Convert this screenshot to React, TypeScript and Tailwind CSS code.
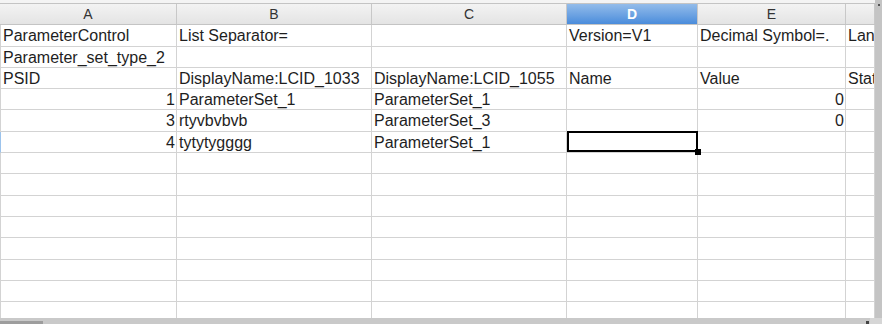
import React from "react";

type Cell = { t: string; r?: boolean };

const colW = ["w-[177px] border-l", "w-[195px]", "w-[195px]", "w-[131px]", "w-[148px]", "w-[29px]"];
const headW = ["w-[177px]", "w-[195px]", "w-[195px]", "w-[131px]", "w-[148px]", "w-[29px]"];
const heads = ["A", "B", "C", "D", "E", ""];
const rowH = [
  "h-[22px]", "h-[21px]", "h-[21px]", "h-[21px]", "h-[22px]", "h-[21px]", "h-[21px]",
  "h-[22px]", "h-[21px]", "h-[21px]", "h-[22px]", "h-[21px]", "h-[21px]", "h-[22px]",
];

const data: Cell[][] = [
  [{ t: "ParameterControl" }, { t: "List Separator=" }, { t: "" }, { t: "Version=V1" }, { t: "Decimal Symbol=." }, { t: "Language=" }],
  [{ t: "Parameter_set_type_2" }, { t: "" }, { t: "" }, { t: "" }, { t: "" }, { t: "" }],
  [{ t: "PSID" }, { t: "DisplayName:LCID_1033" }, { t: "DisplayName:LCID_1055" }, { t: "Name" }, { t: "Value" }, { t: "Status" }],
  [{ t: "1", r: true }, { t: "ParameterSet_1" }, { t: "ParameterSet_1" }, { t: "" }, { t: "0", r: true }, { t: "" }],
  [{ t: "3", r: true }, { t: "rtyvbvbvb" }, { t: "ParameterSet_3" }, { t: "" }, { t: "0", r: true }, { t: "" }],
  [{ t: "4", r: true }, { t: "tytytygggg" }, { t: "ParameterSet_1" }, { t: "" }, { t: "" }, { t: "" }],
];

export default function App() {
  return (
    <div className="w-[882px] h-[324px] bg-white overflow-hidden flex flex-col font-['Liberation_Sans',Arial,sans-serif] text-[#1e1e1e]">
      <div className="flex flex-1 min-h-0">
        <div className="w-[875px] flex flex-col overflow-hidden">
          <div className="h-[3px] shrink-0 bg-[#f4f4f4]" />
          <div className="flex h-[22px] shrink-0 border-t border-b border-[#c4c4c4] bg-gradient-to-b from-[#f3f3f3] to-[#e4e4e4]">
            {heads.map((h, i) => (
              <div
                key={i}
                className={`${headW[i]} shrink-0 border-r border-[#c8c8c8] flex items-center justify-center text-[14px] ${
                  i === 3
                    ? "bg-gradient-to-b from-[#93bcea] to-[#4a8cdb] text-white font-bold"
                    : "text-[#333]"
                }`}
              >
                {h}
              </div>
            ))}
          </div>
          {rowH.map((h, ri) => (
            <div key={ri} className={`flex ${h} shrink-0`}>
              {colW.map((w, ci) => {
                const c = data[ri]?.[ci];
                const sel = ri === 5 && ci === 3;
                const edge = ri === 5 && ci === 0;
                return (
                  <div
                    key={ci}
                    className={`${w} shrink-0 relative border-r border-b border-[#d3d3d3] flex items-center whitespace-nowrap text-[16px] leading-none pt-[1px] ${
                      c?.r ? "justify-end pr-[1px]" : "pl-[2px]"
                    } ${edge ? "border-l-[#9cc3ec]" : ""} ${sel ? "overflow-visible z-10" : "overflow-hidden"}`}
                  >
                    {c?.t}
                    {sel && (
                      <>
                        <div className="absolute -top-px left-0 -right-px bottom-0 border-2 border-black" />
                        <div className="absolute left-[128px] top-[17px] w-[6px] h-[6px] bg-black" />
                      </>
                    )}
                  </div>
                );
              })}
            </div>
          ))}
        </div>
        <div className="w-[7px] bg-[#c4c4c4] relative">
          <div className="absolute left-[3px] top-[4px] w-[2px] h-[2px] bg-[#555]" />
        </div>
      </div>
      <div className="h-[6px] shrink-0 flex bg-[#c9c9c9]">
        <div className="w-[43px] h-[3px] mt-[3px] bg-[#9d9d9d]" />
        <div className="flex-1" />
        <div className="w-[12px] bg-[#d6d6d6] relative">
          <div className="absolute left-[-4px] top-[3px] w-[3px] h-[3px] bg-[#444]" />
        </div>
      </div>
    </div>
  );
}
